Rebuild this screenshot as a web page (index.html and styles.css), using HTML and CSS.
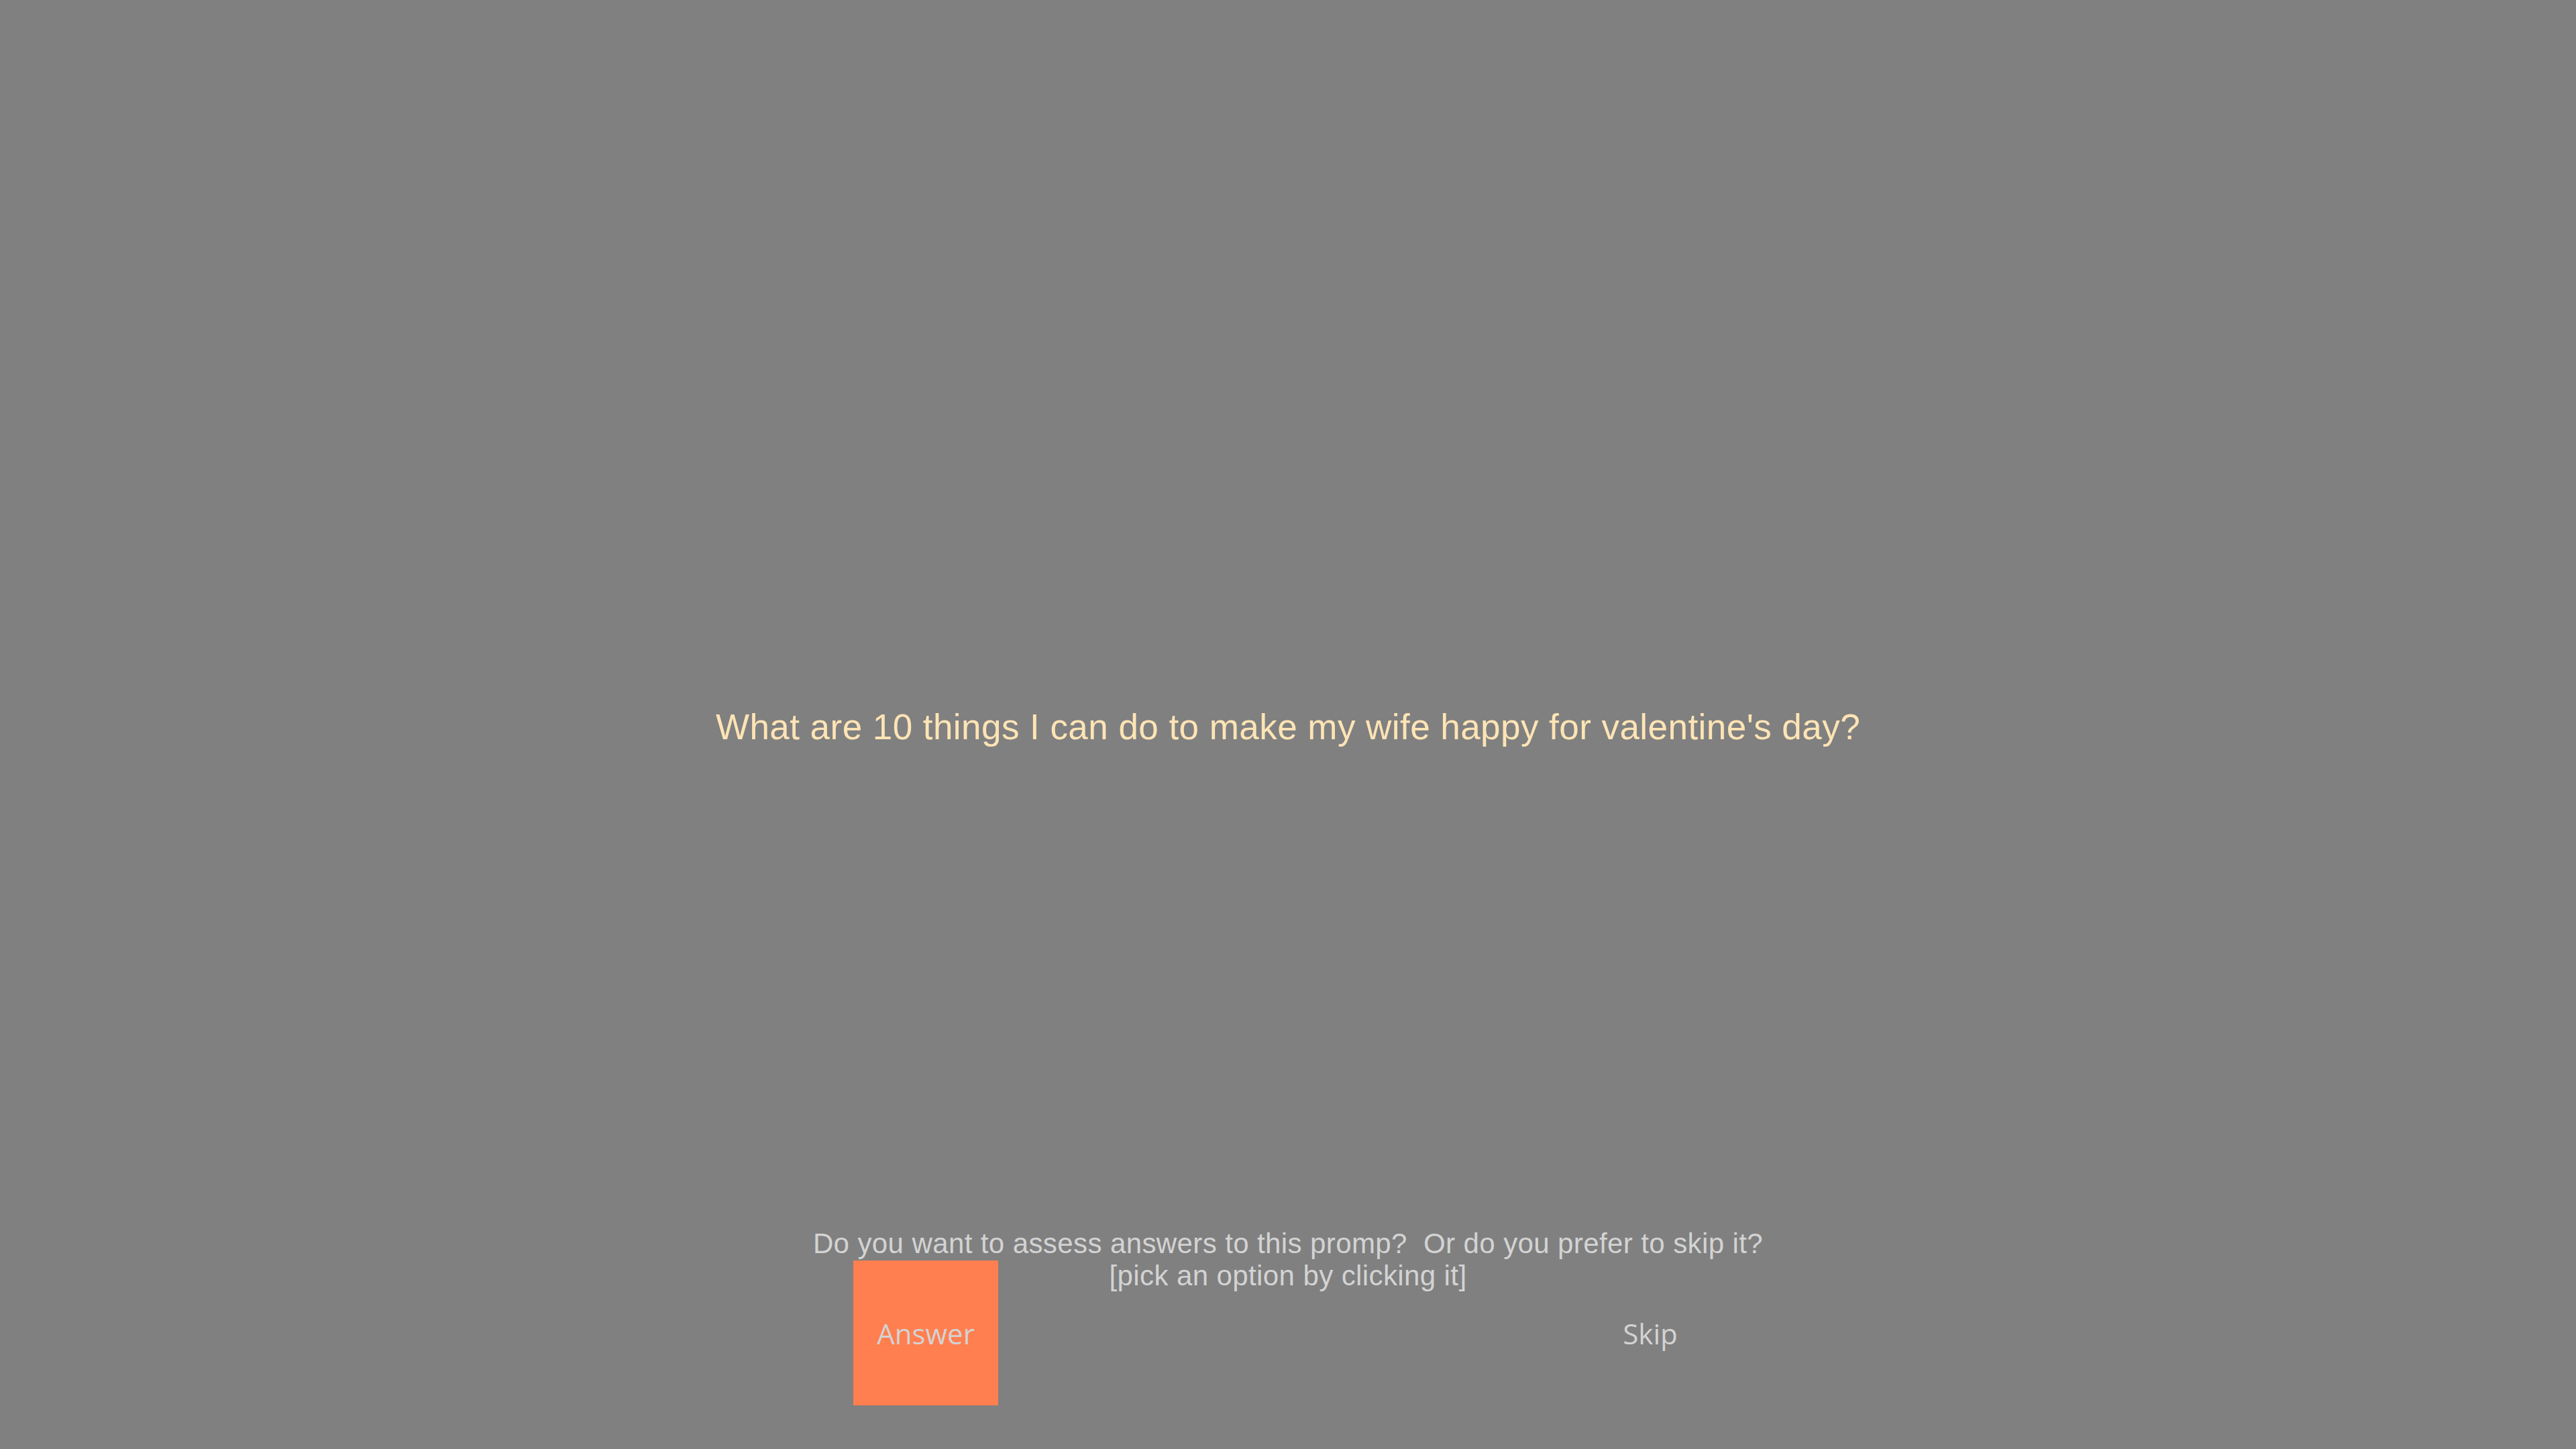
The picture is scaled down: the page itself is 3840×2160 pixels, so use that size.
FILE: index.html
```html
<!DOCTYPE html>
<html lang="en">
<head>
<meta charset="utf-8">
<title>Prompt</title>
<link rel="stylesheet" href="styles.css">
</head>
<body>
<div class="screen">
  <div class="question">What are 10 things I can do to make my wife happy for valentine's day?</div>
  <div class="prompt">
    <div class="prompt-line">Do you want to assess answers to this promp?  Or do you prefer to skip it?</div>
    <div class="prompt-line">[pick an option by clicking it]</div>
  </div>
  <div class="choices">
    <div class="choice choice-answer">Answer</div>
    <div class="choice choice-skip">Skip</div>
  </div>
</div>
</body>
</html>
```

FILE: styles.css
```css
html, body {
  margin: 0;
  padding: 0;
  background: #808080;
}

.screen {
  width: 3840px;
  height: 2160px;
  display: flex;
  flex-direction: column;
  align-items: center;
  overflow: hidden;
}

.question {
  margin-top: 1053px;
  font-family: "Liberation Sans", Arial, sans-serif;
  font-size: 53px;
  letter-spacing: 0.45px;
  line-height: normal;
  color: #ffe4b5;
  text-align: center;
  white-space: nowrap;
}

.prompt {
  margin-top: 716px;
  font-family: "Liberation Sans", Arial, sans-serif;
  font-size: 42px;
  letter-spacing: 0.4px;
  line-height: 48px;
  color: #d3d3d3;
  text-align: center;
}

.prompt-line {
  white-space: pre;
}

.choices {
  margin-top: -47px;
  display: flex;
  gap: 864px;
}

.choice {
  width: 216px;
  height: 216px;
  display: flex;
  align-items: center;
  justify-content: center;
  font-family: "Open Sans", sans-serif;
  font-size: 42px;
  color: #d3d3d3;
}

.choice-answer {
  background: #ff7f50;
}
```
